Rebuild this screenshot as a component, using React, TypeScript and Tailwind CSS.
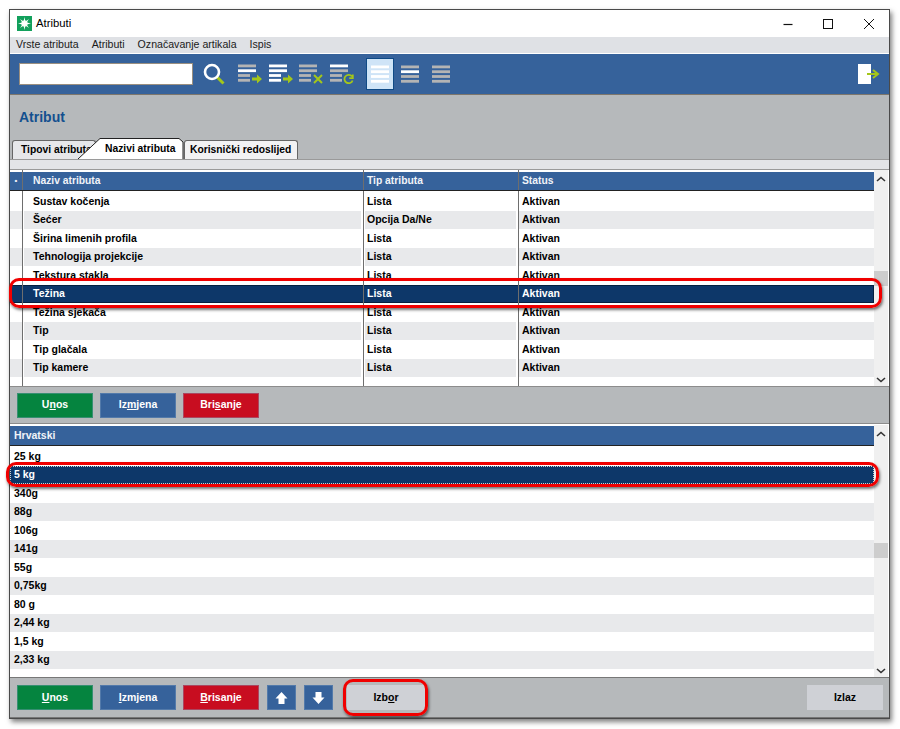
import type { ReactNode } from "react";

const upperRows: [string, string][] = [
  ["Sustav kočenja", "Lista"],
  ["Šećer", "Opcija Da/Ne"],
  ["Širina limenih profila", "Lista"],
  ["Tehnologija projekcije", "Lista"],
  ["Tekstura stakla", "Lista"],
  ["Težina", "Lista"],
  ["Težina sjekača", "Lista"],
  ["Tip", "Lista"],
  ["Tip glačala", "Lista"],
  ["Tip kamere", "Lista"],
];

const values = ["25 kg", "5 kg", "340g", "88g", "106g", "141g", "55g", "0,75kg", "80 g", "2,44 kg", "1,5 kg", "2,33 kg"];

const W = "#ffffff";
const G = "#b4b4b4";

function ToolIcon({ colors, badge }: { colors: string[]; badge: "arrow" | "x" | "redo" }) {
  const widths = [18, 18, 12, 12];
  return (
    <svg width="25" height="20" viewBox="0 0 25 20">
      {colors.map((c, i) => (
        <rect key={i} x={0} y={0.5 + i * 4.8} width={widths[i]} height={2.8} fill={c} />
      ))}
      {badge === "arrow" && <path d="M14 13.5h5v-3l5 4.5-5 4.5v-3h-5z" fill="#a4c61a" />}
      {badge === "x" && <path d="M15 11l8 8M23 11l-8 8" stroke="#a4c61a" strokeWidth="2" fill="none" />}
      {badge === "redo" && <path d="M22 12.5a4.2 4.2 0 1 0 .6 4M22.8 10.5v3.6h-3.6" stroke="#a4c61a" strokeWidth="1.8" fill="none" />}
    </svg>
  );
}

function ViewIcon({ colors, active }: { colors: string[]; active?: boolean }) {
  return (
    <div className={`flex h-[32px] w-[28px] items-center justify-center ${active ? "border border-[#0f4a86] bg-[#cfe4f7]" : ""}`}>
      <svg width="18" height="18" viewBox="0 0 18 18">
        {colors.map((c, i) => (
          <rect key={i} x={0} y={0.5 + i * 4.8} width={18} height={2.8} fill={c} />
        ))}
      </svg>
    </div>
  );
}

function Btn({ children, color }: { children: ReactNode; color: string }) {
  return (
    <button className={`flex h-[25px] w-[76px] items-center justify-center border border-[#7fa0c0]/40 text-[10.5px] font-bold text-white ${color}`}>
      <span>{children}</span>
    </button>
  );
}

function Arrow({ down }: { down?: boolean }) {
  return (
    <button className="flex h-[25px] w-[29px] items-center justify-center border border-[#7fa0c0]/40 bg-[#36629b]">
      <svg width="13" height="14" viewBox="0 0 13 14" className={down ? "rotate-180" : ""}>
        <path d="M6.5 1L12.5 7.5H9.5V13H3.5V7.5H.5z" fill="#fff" />
      </svg>
    </button>
  );
}

function Scrollbar({ thumbTop }: { thumbTop: number }) {
  return (
    <div className="relative w-[14px] shrink-0 bg-[#f0f0f0]">
      <svg width="10" height="6" viewBox="0 0 10 6" className="absolute left-[2px] top-[6px]">
        <path d="M1 5l4-3.5L9 5" stroke="#333" strokeWidth="1.6" fill="none" />
      </svg>
      <div className="absolute left-0 h-[15px] w-[14px] bg-[#cdcdcd]" style={{ top: thumbTop }} />
      <svg width="10" height="6" viewBox="0 0 10 6" className="absolute bottom-[3px] left-[2px]">
        <path d="M1 1l4 3.5L9 1" stroke="#333" strokeWidth="1.6" fill="none" />
      </svg>
    </div>
  );
}

function Ring({ className }: { className: string }) {
  return <div className={`pointer-events-none absolute rounded-[10px] border-[3px] border-[#f00000] shadow-[1px_2px_3px_rgba(0,0,0,0.55)] ${className}`} />;
}

const cols = "grid grid-cols-[12px_341px_155px_1fr]";
const divider = "border-l border-[#6e6e6e]";

export default function App() {
  return (
    <div className="h-[729px] w-[900px] bg-white pl-[9px] pt-[9px] text-black [font-family:'Liberation_Sans',Arial,sans-serif]">
      <div className="relative flex h-[710px] w-[881px] flex-col border border-[#4a4a4a] bg-white shadow-[2px_3px_5px_rgba(0,0,0,0.5)]">
        {/* title bar */}
        <div className="flex h-[27px] shrink-0 items-center bg-white pl-[7px]">
          <svg width="15" height="15" viewBox="0 0 15 15">
            <rect width="15" height="15" fill="#12a05c" />
            <circle cx="7.5" cy="7.5" r="3.2" fill="#bff0d5" />
            <path d="M7.5 1L8.4 5.4 12 3 9.6 6.6 14 7.5 9.6 8.4 12 12 8.4 9.6 7.5 14 6.6 9.6 3 12 5.4 8.4 1 7.5 5.4 6.6 3 3 6.6 5.4z" fill="#fff" />
          </svg>
          <span className="ml-[4px] text-[11.3px]">Atributi</span>
          <div className="ml-auto flex items-center">
            <svg width="12" height="12" viewBox="0 0 12 12" className="mr-[28px]"><path d="M1.5 6.5h9" stroke="#111" strokeWidth="1.2" /></svg>
            <svg width="12" height="12" viewBox="0 0 12 12" className="mr-[29px]"><rect x="1.5" y="1.5" width="9" height="9" fill="none" stroke="#111" /></svg>
            <svg width="12" height="12" viewBox="0 0 12 12" className="mr-[14px]"><path d="M1 1l10 10M11 1L1 11" stroke="#111" /></svg>
          </div>
        </div>

        {/* menu */}
        <div className="flex h-[17px] shrink-0 items-center gap-[13px] border-b border-white bg-[#dfe1e5] pl-[6px] text-[10.6px] text-[#1a1a1a]">
          <span>Vrste atributa</span>
          <span>Atributi</span>
          <span>Označavanje artikala</span>
          <span>Ispis</span>
        </div>

        {/* toolbar */}
        <div className="flex h-[41px] shrink-0 items-center border-b border-[#7d766c] bg-[#36629b] pl-[9px]">
          <div className="h-[22px] w-[174px] border border-[#9a8f80] bg-white" />
          <svg width="22" height="22" viewBox="0 0 22 22" className="ml-[10px]">
            <path d="M14 14l6.5 6.5" stroke="#a4c61a" strokeWidth="3" />
            <circle cx="9" cy="9" r="7" fill="none" stroke="#fff" strokeWidth="2.6" />
          </svg>
          <div className="ml-[13px] flex items-center gap-[5.5px]">
            <ToolIcon colors={[G, W, G, G]} badge="arrow" />
            <ToolIcon colors={[W, W, W, W]} badge="arrow" />
            <ToolIcon colors={[G, G, G, G]} badge="x" />
            <ToolIcon colors={[W, G, G, G]} badge="redo" />
          </div>
          <div className="ml-[11px] flex items-center gap-[2.5px]">
            <ViewIcon active colors={[W, W, W, W]} />
            <ViewIcon colors={[G, W, G, G]} />
            <ViewIcon colors={[G, G, G, G]} />
          </div>
          <svg width="24" height="22" viewBox="0 0 24 22" className="ml-auto mr-[9px]">
            <rect x="2" y="1" width="13" height="20" fill="#fff" />
            <path d="M11 11h10M17 7l5 4-5 4" stroke="#a4c61a" strokeWidth="2" fill="none" />
          </svg>
        </div>

        {/* section head with tabs */}
        <div className="flex h-[64px] shrink-0 flex-col bg-[#b6b9bb]">
          <div className="pl-[9px] pt-[12px] text-[14px] font-bold text-[#13508f]">Atribut</div>
          <div className="mt-auto flex items-end pl-[2px]">
            <div className="flex h-[19px] w-[84px] items-center rounded-t-[3px] border border-b-0 border-[#666] bg-[#e6e7ea] pl-[8px] text-[10.3px] font-bold">Tipovi atributa</div>
            <div className="relative -ml-[18px] flex h-[21px] w-[106px] items-center pl-[27px] text-[10.3px] font-bold">
              <svg width="106" height="21" viewBox="0 0 106 21" className="absolute left-0 top-0">
                <path d="M0 21L22 .5H101L105 4V21z" fill="#fff" />
                <path d="M0 21L22 .5H101L105 4V21" fill="none" stroke="#222" />
              </svg>
              <span className="relative">Nazivi atributa</span>
            </div>
            <div className="flex h-[19px] w-[114px] items-center rounded-t-[3px] border border-b-0 border-[#666] bg-[#f2f2f3] pl-[5px] text-[10.3px] font-bold">Korisnički redoslijed</div>
          </div>
        </div>
        <div className="h-[11px] shrink-0 border-y border-[#9a9a9a] bg-[#e3e4e7]" />

        {/* upper table */}
        <div className="flex h-[216px] shrink-0 bg-white pr-[1px]">
          <div className="flex min-w-0 flex-1 flex-col">
            <div className={`${cols} h-[2px] shrink-0`}>
              <span />
              <span className={divider} />
              <span className={divider} />
              <span className={divider} />
            </div>
            <div className={`${cols} h-[19px] shrink-0 items-center border-b border-[#222] bg-[#36629b] text-[10.3px] font-bold text-[#f0f3f8]`}>
              <span className="text-center text-[8px] leading-none">•</span>
              <span className={`flex h-full items-center pl-[10px] ${divider}`}>Naziv atributa</span>
              <span className={`flex h-full items-center pl-[3px] ${divider}`}>Tip atributa</span>
              <span className={`flex h-full items-center pl-[3px] ${divider}`}>Status</span>
            </div>
            <div className={`${cols} h-[1px] shrink-0`}>
              <span />
              <span className={divider} />
              <span className={divider} />
              <span className={divider} />
            </div>
            {upperRows.map(([name, type], i) => {
              const selected = name === "Težina";
              const tone = selected
                ? "bg-[#0d3769] text-white shadow-[inset_0_0_0_1px_#04203f]"
                : i % 2 === 1
                  ? "bg-[#e8e9eb]"
                  : "bg-white";
              const gap = !selected && i % 2 === 1 ? "shadow-[inset_1px_0_0_#fff,inset_-2px_0_0_#fff]" : "";
              return (
                <div key={name} className={`${cols} h-[18.5px] shrink-0 items-stretch text-[10.5px] font-bold ${tone}`}>
                  <span />
                  <span className={`flex items-center pl-[10px] pt-[1px] ${divider} ${gap}`}>{name}</span>
                  <span className={`flex items-center pl-[3px] pt-[1px] ${divider} ${gap}`}>{type}</span>
                  <span className={`flex items-center pl-[3px] pt-[1px] ${divider}`}>Aktivan</span>
                </div>
              );
            })}
            <div className={`${cols} flex-1`}>
              <span />
              <span className={divider} />
              <span className={divider} />
              <span className={divider} />
            </div>
          </div>
          <Scrollbar thumbTop={101} />
        </div>

        {/* upper buttons */}
        <div className="flex h-[38px] shrink-0 items-center gap-[7px] border-y border-[#8c8c8c] bg-[#b6b9bb] pl-[7px]">
          <Btn color="bg-[#05843f]">U<u>n</u>os</Btn>
          <Btn color="bg-[#36629b]">Iz<u>m</u>jena</Btn>
          <Btn color="bg-[#c80d20]">Bri<u>s</u>anje</Btn>
        </div>

        {/* lower list */}
        <div className="flex min-h-0 flex-1 border-t border-white bg-white pr-[1px]">
          <div className="flex min-w-0 flex-1 flex-col pt-[1px]">
            <div className="flex h-[20px] shrink-0 items-center border-b border-[#222] bg-[#36629b] pl-[4px] text-[10.5px] font-bold text-[#f0f3f8]">Hrvatski</div>
            <div className="h-[1px] shrink-0" />
            {values.map((v, i) => {
              const selected = v === "5 kg";
              const tone = selected
                ? "border border-dotted border-[#cfcfcf] bg-[#0d3769] pl-[3px] text-white"
                : i % 2 === 1
                  ? "bg-[#e8e9eb] pl-[4px]"
                  : "bg-white pl-[4px]";
              return (
                <div key={v} className={`flex h-[18.5px] shrink-0 items-center pt-[1px] text-[10.5px] font-bold ${tone}`}>
                  {v}
                </div>
              );
            })}
          </div>
          <Scrollbar thumbTop={118} />
        </div>

        {/* lower buttons */}
        <div className="flex h-[41px] shrink-0 items-center gap-[7px] border-y border-[#777] bg-[#b6b9bb] pl-[7px] pr-[6px]">
          <Btn color="bg-[#05843f]"><u>U</u>nos</Btn>
          <Btn color="bg-[#36629b]"><u>I</u>zmjena</Btn>
          <Btn color="bg-[#c80d20]"><u>B</u>risanje</Btn>
          <div className="ml-[1px] flex gap-[8px]">
            <Arrow />
            <Arrow down />
          </div>
          <button className="ml-[7px] flex h-[25px] w-[78px] items-center justify-center bg-[#cfd1d6] text-[10.5px] font-bold">
            <span>Izb<u>o</u>r</span>
          </button>
          <button className="ml-auto flex h-[25px] w-[76px] items-center justify-center bg-[#cfd1d6] text-[10.5px] font-bold">Izlaz</button>
        </div>

        {/* red highlights from the annotated screenshot */}
        <Ring className="-left-[1px] top-[268px] h-[30px] w-[873px]" />
        <Ring className="-left-[4px] top-[452px] h-[25px] w-[873px]" />
        <Ring className="left-[333px] top-[669px] h-[37px] w-[85px]" />
      </div>
    </div>
  );
}
